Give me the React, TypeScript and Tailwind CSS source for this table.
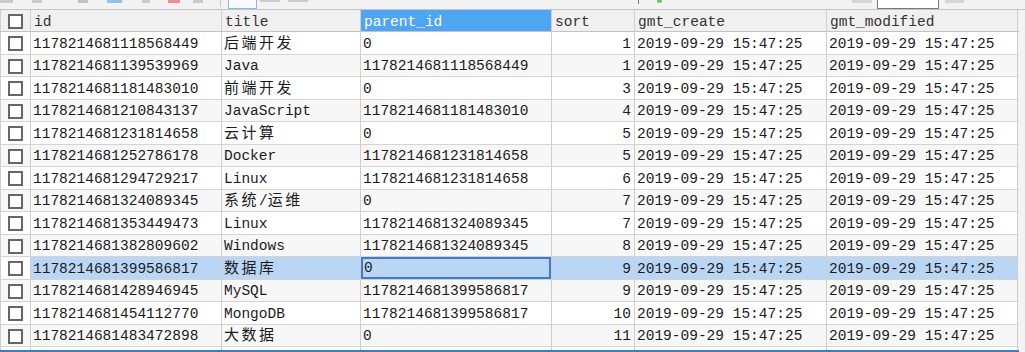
import React from 'react';

interface Row {
  id: string;
  title: string;
  parentId: string;
  sort: string;
  created: string;
  modified: string;
}

const TIME = '2019-09-29 15:47:25';

const raw: [string, string, string, number][] = [
  ['1178214681118568449', '后端开发', '0', 1],
  ['1178214681139539969', 'Java', '1178214681118568449', 1],
  ['1178214681181483010', '前端开发', '0', 3],
  ['1178214681210843137', 'JavaScript', '1178214681181483010', 4],
  ['1178214681231814658', '云计算', '0', 5],
  ['1178214681252786178', 'Docker', '1178214681231814658', 5],
  ['1178214681294729217', 'Linux', '1178214681231814658', 6],
  ['1178214681324089345', '系统/运维', '0', 7],
  ['1178214681353449473', 'Linux', '1178214681324089345', 7],
  ['1178214681382809602', 'Windows', '1178214681324089345', 8],
  ['1178214681399586817', '数据库', '0', 9],
  ['1178214681428946945', 'MySQL', '1178214681399586817', 9],
  ['1178214681454112770', 'MongoDB', '1178214681399586817', 10],
  ['1178214681483472898', '大数据', '0', 11],
];

const rows: Row[] = raw.map(([id, title, parentId, sort]) => ({
  id,
  title,
  parentId,
  sort: String(sort),
  created: TIME,
  modified: TIME,
}));

const emptyRow: Row = { id: '', title: '', parentId: '', sort: '', created: '', modified: '' };

const SELECTED = 10;

// CJK runs come from the fallback font and are drawn a bit wider
function Text({ value }: { value: string }) {
  const parts = value.split(/([\u4e00-\u9fff]+)/).filter(Boolean);
  return (
    <>
      {parts.map((p, i) =>
        /[\u4e00-\u9fff]/.test(p) ? (
          <span
            key={i}
            className="relative top-[-2px] inline-block leading-[20px] align-middle font-['Noto_Sans_CJK_SC',sans-serif] text-[15px] tracking-[2.5px]"
          >
            {p}
          </span>
        ) : (
          <span key={i}>{p}</span>
        )
      )}
    </>
  );
}

function Checkbox() {
  return <span className="block w-[15px] h-[15px] border-2 border-[#666666] bg-white" />;
}

const cell = 'h-full shrink-0 flex items-center border-r border-[#cfcfcf] overflow-hidden whitespace-nowrap leading-[18px]';

function Header() {
  return (
    <div className="flex h-[22px] shrink-0 border-b border-[#c2c2c2] bg-[#f0f0f0] text-[#333333]">
      <div className={`${cell} pt-[2px] w-[31px] justify-center border-l`}>
        <Checkbox />
      </div>
      <div className={`${cell} pt-[2px] w-[191px] pl-[3px]`}>id</div>
      <div className={`${cell} pt-[2px] w-[139px] pl-[3px]`}>title</div>
      <div className={`${cell} pt-[2px] w-[191px] pl-[3px] bg-[#4ea6f2] text-white`}>parent_id</div>
      <div className={`${cell} pt-[2px] w-[83px] pl-[3px]`}>sort</div>
      <div className={`${cell} pt-[2px] w-[192px] pl-[3px]`}>gmt_create</div>
      <div className={`${cell} pt-[2px] w-[191px] pl-[3px]`}>gmt_modified</div>
    </div>
  );
}

function DataRow({ row, index, box = true }: { row: Row; index: number; box?: boolean }) {
  const selected = index === SELECTED;
  const stripe = index % 2 === 1 ? 'bg-[#f7f7f7]' : 'bg-white';
  const bg = selected ? 'bg-[#b9d7f5]' : stripe;
  return (
    <div className="flex h-[22.5px] shrink-0 border-b border-[#d4d4d4] text-[#1c1c1c]">
      <div className={`${cell} pt-[2px] w-[31px] justify-center border-l ${stripe}`}>
        {box && <Checkbox />}
      </div>
      <div className={`${cell} pt-[2px] w-[191px] pl-[2px] ${bg}`}>{row.id}</div>
      <div className={`${cell} pt-[2px] w-[139px] pl-[2px] ${bg}`}>
        <Text value={row.title} />
      </div>
      {selected ? (
        <div className={`${cell} w-[191px] ${bg}`}>
          {/* focused cell */}
          <div className="flex h-full w-full items-center pt-px pl-px border-2 border-[#3b7dca]">
            {row.parentId}
          </div>
        </div>
      ) : (
        <div className={`${cell} pt-[2px] w-[191px] pl-[2px] ${bg}`}>{row.parentId}</div>
      )}
      <div className={`${cell} pt-[2px] w-[83px] justify-end pr-[3px] ${bg}`}>{row.sort}</div>
      <div className={`${cell} pt-[2px] w-[192px] pl-[2px] ${bg}`}>{row.created}</div>
      <div className={`${cell} pt-[2px] w-[191px] pl-[2px] ${bg}`}>{row.modified}</div>
    </div>
  );
}

function Toolbar() {
  // only the lower edge of the toolbar icons is visible
  return (
    <div className="h-[10px] shrink-0 flex items-start bg-[#f2f2f2] border-b border-[#c4c4c4]">
      <span className="w-[13px] h-[3px] bg-[#c9c9c9]" />
      <span className="ml-[19px] w-[10px] h-[3px] bg-[#c9c9c9]" />
      <span className="ml-[36px] w-[10px] h-[3px] bg-[#c2c2c2]" />
      <span className="ml-[19px] w-[15px] h-[3px] bg-[#8fc3ee]" />
      <span className="ml-[20px] w-[8px] h-[3px] bg-[#cccccc]" />
      <span className="ml-[18px] w-[12px] h-[3px] bg-[#f08c8c]" />
      <span className="ml-[13px] w-[10px] h-[3px] bg-[#c9c9c9]" />
      <span className="ml-[17px] w-px h-[7px] bg-[#c8c8c8]" />
      <span className="ml-[7px] w-[29px] h-[9px] border border-t-0 border-[#8cb8e6] bg-[#f6f9fd]" />
      <span className="ml-[3px] w-[20px] h-[2px] bg-[#cbcbcb]" />
      <span className="ml-[8px] w-[20px] h-[2px] bg-[#cbcbcb]" />
      <span className="ml-[330px] w-px h-[4px] bg-[#777777]" />
      <span className="ml-[18px] w-[5px] h-[3px] rounded-b-full bg-[#6cc46c]" />
      <span className="ml-[190px] w-[20px] h-[3px] bg-[#d6d6d6]" />
      <span className="ml-[5px] w-[62px] h-[9px] border border-t-0 border-[#7a7a7a] bg-white" />
      <span className="ml-[6px] w-[19px] h-[3px] bg-[#d6d6d6]" />
    </div>
  );
}

export default function App() {
  return (
    <div className="w-[1025px] h-[352px] overflow-hidden flex flex-col bg-[#f3f3f3] font-['Liberation_Mono','Noto_Sans_CJK_SC',monospace] text-[14.5px]">
      <Toolbar />
      <div className="flex-1 min-h-0 overflow-hidden flex flex-col w-[1019px]">
        <Header />
        {rows.map((r, i) => (
          <DataRow key={r.id} row={r} index={i} />
        ))}
        <DataRow row={emptyRow} index={rows.length} box={false} />
      </div>
      <div className="h-[2px] shrink-0 w-[1019px] bg-[#3d7dc6]" />
    </div>
  );
}
